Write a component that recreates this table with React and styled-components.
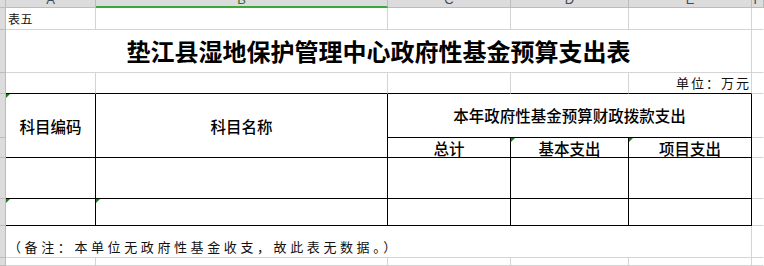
import React from "react";
import styled, { createGlobalStyle, css } from "styled-components";

const GRID = "#d4d4d4";
const HEAD_LINE = "#bcbcbc";
const HEAD_BG = "#dcdcdc";
const BLACK = "#000";
const GREEN = "#3aa83a";

const GlobalStyle = createGlobalStyle`
  html, body { margin: 0; padding: 0; background: #fff; overflow: hidden; }
  body { font-family: "Noto Sans CJK SC", "Noto Sans", sans-serif; color: #000; }
`;

const Sheet = styled.div`
  display: grid;
  width: 764px;
  height: 266px;
  grid-template-columns: 6px 90px 292px 123px 118px 123px 1fr;
  grid-template-rows: 8px 22px 43px 21px 44px 20px 41px 27px 32px 1fr;
  background: #fff;
`;

const place = css`
  grid-column: ${(p) => p.$c};
  grid-row: ${(p) => p.$r};
`;

const Corner = styled.div`
  ${place};
  box-sizing: border-box;
  background: ${HEAD_BG};
  border-right: 1px solid ${HEAD_LINE};
  border-bottom: 1px solid ${HEAD_LINE};
`;

const ColHead = styled.div`
  ${place};
  box-sizing: border-box;
  background: ${HEAD_BG};
  border-right: 1px solid ${HEAD_LINE};
  border-bottom: ${(p) => (p.$active ? `2px solid ${GREEN}` : `1px solid ${HEAD_LINE}`)};
  display: flex;
  justify-content: center;
  align-items: flex-end;
  padding-bottom: ${(p) => (p.$active ? "0px" : "1px")};
  overflow: hidden;
  font-family: "Liberation Sans", Arial, sans-serif;
  font-size: 13px;
  line-height: 13px;
  color: ${(p) => (p.$active ? "#2f6e2f" : "#3f4a5a")};
`;

const RowHead = styled.div`
  ${place};
  box-sizing: border-box;
  background: ${HEAD_BG};
  border-right: 1px solid ${HEAD_LINE};
  border-bottom: 1px solid ${HEAD_LINE};
`;

const Cell = styled.div`
  ${place};
  box-sizing: border-box;
  position: relative;
  border-right: 1px solid ${(p) => (p.$br ? BLACK : p.$noR ? "transparent" : GRID)};
  border-bottom: 1px solid ${(p) => (p.$bb ? BLACK : GRID)};
  display: flex;
  align-items: ${(p) => p.$v || "center"};
  justify-content: ${(p) => p.$h || "center"};
  white-space: nowrap;
`;

const Title = styled.h1`
  margin: 0;
  font-size: 24px;
  font-weight: 700;
  line-height: 30px;
  letter-spacing: 0;
  padding-bottom: 1px;
`;

const SmallNote = styled.span`
  font-size: ${(p) => p.$size || 13}px;
  letter-spacing: ${(p) => p.$ls || 0}px;
  line-height: 16px;
  color: #111;
  padding: ${(p) => p.$pad || "0"};
`;

const HeadText = styled.span`
  font-size: 15.5px;
  line-height: 18px;
  font-weight: 500;
  padding: ${(p) => p.$pad || "0"};
`;

const Flag = styled.span`
  position: absolute;
  top: 0;
  left: 0;
  width: 0;
  height: 0;
  border-top: 4px solid #1c7d1c;
  border-right: 4px solid transparent;
`;

const cols = ["A", "B", "C", "D", "E"];

export default function App() {
  return (
    <>
      <GlobalStyle />
      <Sheet>
        {/* column headers */}
        <Corner $c="1" $r="1" />
        {cols.map((l, i) => (
          <ColHead key={l} $c={`${i + 2}`} $r="1" $active={l === "B"}>
            {l}
          </ColHead>
        ))}
        <ColHead $c="7" $r="1">F</ColHead>

        {/* row headers */}
        {[2, 3, 4, 5, 6, 7, 8, 9, 10].map((r) => (
          <RowHead key={r} $c="1" $r={`${r}`} />
        ))}

        {/* row 1 */}
        <Cell $c="2" $r="2" $h="flex-start" $v="flex-end">
          <SmallNote $size={12} $ls={0.5} $pad="0 0 2px 2px">表五</SmallNote>
        </Cell>
        <Cell $c="3" $r="2" />
        <Cell $c="4" $r="2" />
        <Cell $c="5" $r="2" />
        <Cell $c="6" $r="2" />
        <Cell $c="7" $r="2" $noR />

        {/* row 2: title */}
        <Cell $c="2 / 7" $r="3">
          <Title>垫江县湿地保护管理中心政府性基金预算支出表</Title>
        </Cell>
        <Cell $c="7" $r="3" $noR />

        {/* row 3: unit */}
        <Cell $c="2" $r="4" $bb />
        <Cell $c="3" $r="4" $bb />
        <Cell $c="4" $r="4" $bb />
        <Cell $c="5" $r="4" $bb />
        <Cell $c="6" $r="4" $bb $h="flex-end">
          <SmallNote $size={13} $ls={2} $pad="0 0 0 0">单位：万元</SmallNote>
        </Cell>
        <Cell $c="7" $r="4" $noR />

        {/* rows 4-5: table header */}
        <Cell $c="2" $r="5 / 7" $br $bb>
          <Flag />
          <HeadText>科目编码</HeadText>
        </Cell>
        <Cell $c="3" $r="5 / 7" $br $bb>
          <HeadText>科目名称</HeadText>
        </Cell>
        <Cell $c="4 / 7" $r="5" $br $bb>
          <HeadText $pad="0 0 2px 0">本年政府性基金预算财政拨款支出</HeadText>
        </Cell>
        <Cell $c="7" $r="5" $noR />
        <Cell $c="4" $r="6" $br $bb $v="flex-end">
          <HeadText>总计</HeadText>
        </Cell>
        <Cell $c="5" $r="6" $br $bb $v="flex-end">
          <Flag />
          <HeadText>基本支出</HeadText>
        </Cell>
        <Cell $c="6" $r="6" $br $bb $v="flex-end">
          <Flag />
          <HeadText>项目支出</HeadText>
        </Cell>
        <Cell $c="7" $r="6" $noR />

        {/* row 6: empty data */}
        {cols.map((l, i) => (
          <Cell key={`r6${l}`} $c={`${i + 2}`} $r="7" $br $bb />
        ))}
        <Cell $c="7" $r="7" $noR />

        {/* row 7: empty data with flags */}
        {cols.map((l, i) => (
          <Cell key={`r7${l}`} $c={`${i + 2}`} $r="8" $br $bb>
            {i < 2 && <Flag />}
          </Cell>
        ))}
        <Cell $c="7" $r="8" $noR />

        {/* row 8: note */}
        <Cell $c="2 / 7" $r="9" $h="flex-start" $v="flex-end">
          <SmallNote $size={13} $ls={3.6} $pad="0 0 2px 2px">
            （备注：本单位无政府性基金收支，故此表无数据。）
          </SmallNote>
        </Cell>
        <Cell $c="7" $r="9" $noR />

        {/* row 9 */}
        {cols.map((l, i) => (
          <Cell key={`r9${l}`} $c={`${i + 2}`} $r="10" />
        ))}
        <Cell $c="7" $r="10" $noR />
      </Sheet>
    </>
  );
}
